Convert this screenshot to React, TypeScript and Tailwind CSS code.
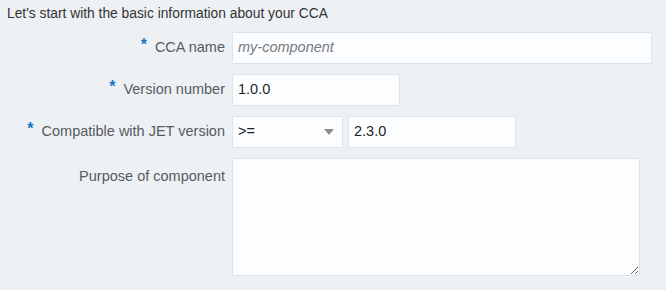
import React from 'react';

const font = { fontFamily: '"Liberation Sans", Arial, sans-serif' };

function Label({ text, required }: { text: string; required?: boolean }) {
  return (
    <div className="w-[225px] shrink-0 flex justify-end items-center text-[14.5px] text-[#555b60]">
      {required && <span className="text-[#1a73c9] text-[16px] font-bold mr-[8px] -mt-[6px]">*</span>}
      <span>{text}</span>
    </div>
  );
}

const field = 'h-[32px] bg-[#fcfdfe] border border-[#dde3e6] rounded-[2px] px-[5px] text-[14.5px] text-[#1f1f1f] flex items-center';

export default function App() {
  return (
    <div className="w-[666px] h-[290px] bg-[#eef1f4] overflow-hidden" style={font}>
      <p className="px-[7px] pt-[6px] text-[13.8px] leading-[16px] text-[#333]">
        Let's start with the basic information about your CCA
      </p>

      <div className="mt-[10px] flex flex-col gap-[10px]">
        <div className="flex gap-[7px]">
          <Label text="CCA name" required />
          <div className={`${field} w-[420px] italic text-[#777b80]`}>my-component</div>
        </div>

        <div className="flex gap-[7px]">
          <Label text="Version number" required />
          <div className={`${field} w-[168px]`}>1.0.0</div>
        </div>

        <div className="flex gap-[7px]">
          <Label text="Compatible with JET version" required />
          <div className={`${field} w-[111px] justify-between pr-[8px]`}>
            <span>&gt;=</span>
            <span className="w-0 h-0 border-l-[5px] border-r-[5px] border-t-[6px] border-l-transparent border-r-transparent border-t-[#8a8d90]" />
          </div>
          <div className={`${field} w-[168px] -ml-[2px]`}>2.3.0</div>
        </div>

        <div className="flex gap-[7px]">
          <div className="w-[225px] shrink-0 flex justify-end pt-[8px] text-[14.5px] text-[#555b60]">
            Purpose of component
          </div>
          <textarea
            className="w-[408px] h-[118px] bg-[#fcfdfe] border border-[#dde3e6] rounded-[2px] px-[6px] text-[14px] outline-none"
            style={font}
          />
        </div>
      </div>
    </div>
  );
}
